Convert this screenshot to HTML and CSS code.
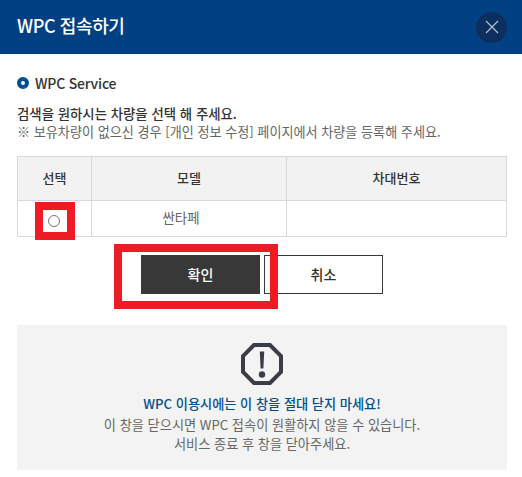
FILE: index.html
```html
<!DOCTYPE html>
<html lang="ko">
<head>
<meta charset="utf-8">
<title>WPC 접속하기</title>
<link rel="stylesheet" href="styles.css">
</head>
<body>
<header class="head">
  <h1 class="head-title">WPC 접속하기</h1>
  <button class="close" aria-label="닫기">
    <svg width="18" height="18" viewBox="0 0 18 18"><path d="M3 3l12 12M15 3L3 15" stroke="#b9c3d0" stroke-width="1.100" fill="none"/></svg>
  </button>
</header>
<main class="content">
  <h2 class="service"><span class="dot"></span>WPC Service</h2>
  <p class="lead">검색을 원하시는 차량을 선택 해 주세요.</p>
  <p class="note">※ 보유차량이 없으신 경우 [개인 정보 수정] 페이지에서 차량을 등록해 주세요.</p>
  <table class="cars">
    <thead>
      <tr><th class="c1">선택</th><th class="c2">모델</th><th>차대번호</th></tr>
    </thead>
    <tbody>
      <tr><td><span class="radio"></span></td><td class="model">싼타페</td><td></td></tr>
    </tbody>
  </table>
  <div class="actions">
    <button class="btn primary">확인</button>
    <button class="btn">취소</button>
  </div>
  <section class="warn">
    <svg class="warn-icon" width="44" height="44" viewBox="0 0 44 44">
      <polygon points="14,3 30,3 41,14 41,30 30,41 14,41 3,30 3,14" fill="none" stroke="#3a3d47" stroke-width="4"/>
      <path d="M19.800 9.500h4.400l-.8 17h-2.800z" fill="#3a3d47"/>
      <circle cx="22" cy="32.500" r="3.200" fill="#3a3d47"/>
    </svg>
    <p class="warn-title">WPC 이용시에는 이 창을 절대 닫지 마세요!</p>
    <p class="warn-text">이 창을 닫으시면 WPC 접속이 원활하지 않을 수 있습니다.<br>서비스 종료 후 창을 닫아주세요.</p>
  </section>
</main>
<div class="mark mark-radio"></div>
<div class="mark mark-btn"></div>
</body>
</html>
```
FILE: styles.css
```css
* { box-sizing: border-box; }
html, body { margin: 0; padding: 0; }
body {
  position: relative;
  width: 522px;
  height: 477px;
  overflow: hidden;
  background: #fff;
  color: #333;
  font-family: "Noto Sans CJK KR", "Noto Sans", sans-serif;
}
p, h1, h2 { margin: 0; }
.head {
  height: 54px;
  background: #004083;
  display: flex;
  align-items: center;
  justify-content: space-between;
  padding: 0 15px 4px 17px;
}
.head-title { color: #fff; font-size: 18px; font-weight: 500; line-height: 26px; letter-spacing: -0.4px; }
.close {
  width: 31px;
  height: 31px;
  border: 0;
  padding: 0;
  border-radius: 50%;
  background: #0d2f5f;
  display: flex;
  align-items: center;
  justify-content: center;
  margin-top: 4px;
}
.content { padding: 0 15px 0 17px; }
.service {
  display: flex;
  align-items: center;
  gap: 6px;
  margin-top: 19px;
  font-size: 14px;
  font-weight: 500;
  line-height: 20px;
  color: #333;
  letter-spacing: -0.2px;
}
.dot { width: 12px; height: 12px; border-radius: 50%; border: 4px solid #004f92; background: #fff; }
.lead { margin-top: 11px; font-size: 13.400px; font-weight: 500; line-height: 19px; color: #333; }
.note { font-size: 13.100px; line-height: 18px; color: #666; }
.cars {
  width: 490px;
  margin-top: 15px;
  border-collapse: collapse;
  table-layout: fixed;
  font-size: 13px;
}
.cars th, .cars td { border: 1px solid #d9d9d9; padding: 0; text-align: center; }
.cars th { height: 44px; background: #f2f2f2; font-weight: 500; color: #333; padding-bottom: 2px; }
.cars td { height: 36px; color: #666; font-size: 13.400px; }
.c1 { width: 74px; }
.c2 { width: 195px; }
.cars .model { padding: 0 16px 3px 0; }
.radio { display: inline-block; width: 12px; height: 12px; margin-left: -1px; border: 1px solid #767676; border-radius: 50%; vertical-align: middle; }
.actions { display: flex; justify-content: center; gap: 4px; margin-top: 18px; }
.btn {
  width: 119px;
  height: 39px;
  border: 1px solid #383838;
  background: #fff;
  color: #333;
  padding: 0 0 2px;
  font: 500 14px "Noto Sans CJK KR", sans-serif;
}
.btn.primary { background: #383838; color: #fff; }
.warn {
  margin-top: 31px;
  width: 490px;
  height: 145px;
  background: #f3f3f3;
  display: flex;
  flex-direction: column;
  align-items: center;
  padding-top: 17px;
}
.warn-icon { display: block; }
.warn-title { margin-top: 8px; font-size: 13.200px; font-weight: 500; line-height: 20px; color: #004f92; }
.warn-text { margin-top: 1px; font-size: 13.200px; line-height: 19px; color: #666; text-align: center; }
.mark { position: absolute; border: 8px solid #ed1c24; }
.mark-radio { left: 35px; top: 202px; width: 40px; height: 38px; }
.mark-btn { left: 114px; top: 244px; width: 164px; height: 65px; }
```
